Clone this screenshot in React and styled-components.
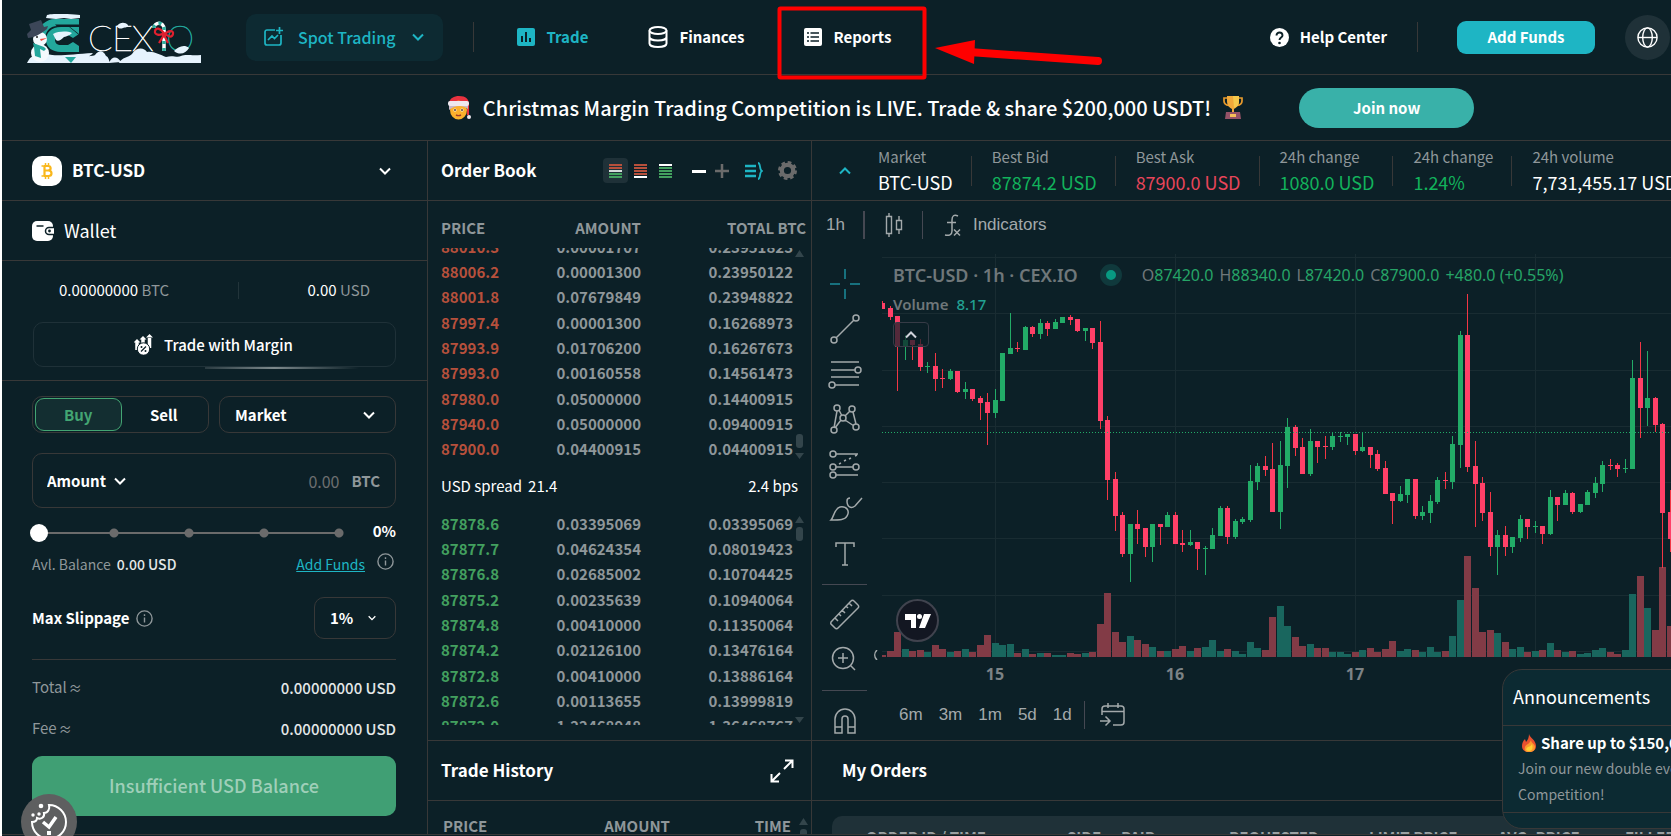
import React, { useState } from 'react';
import styled, { createGlobalStyle, css } from 'styled-components';

const GlobalStyle = createGlobalStyle`
  * { box-sizing: border-box; }
  body {
    margin: 0;
    overflow: hidden;
    background: #ffffff;
    color: #ffffff;
    font-family: 'Noto Sans CJK SC', 'Noto Sans', sans-serif;
    font-size: 16px;
    line-height: 24px;
  }
  button, input, select {
    margin: 0;
    padding: 0;
    border: 0;
    background: none;
    color: inherit;
    font: inherit;
  }
  button { cursor: pointer; }
  a { color: inherit; text-decoration: none; }
  svg { display: block; flex: none; }
`;

const line = '#383838';
const bg = '#0c2027';
const teal = '#1eb5c4';
const grey = '#8f979a';

/* ---------- layout ---------- */

const Page = styled.div`
  display: flex;
  flex-direction: column;
  height: 100vh;
  margin-left: 2px;
  padding-bottom: 1px;
  background: ${bg};
  overflow: hidden;
`;

const Header = styled.header`
  display: flex;
  align-items: center;
  flex: none;
  height: 75px;
  padding-left: 25px;
  border-bottom: 1px solid ${line};
  font-weight: 500;
`;

const LogoLink = styled.a`
  padding-top: 3px;
  margin-right: 45px;
`;

const SpotButton = styled.button`
  display: flex;
  align-items: center;
  gap: 15px;
  height: 47px;
  padding: 0 19px 0 18px;
  margin-right: 30px;
  border-radius: 10px;
  background: #0d2a32;
  color: ${teal};
  svg:last-child { margin-left: 2px; }
`;

const HeaderLine = styled.span`
  width: 1px;
  height: 30px;
  background: ${line};
`;

const Nav = styled.nav`
  display: flex;
  align-items: center;
  gap: 60px;
  padding-left: 43px;
`;

const NavLink = styled.a`
  display: flex;
  align-items: center;
  gap: 11px;
  color: ${(p) => (p.$active ? teal : '#ffffff')};
  font-size: 15px;
  font-weight: 700;
`;

const HeaderRight = styled.div`
  display: flex;
  align-items: center;
  gap: 30px;
  margin-left: auto;
`;

const AddFundsButton = styled.button`
  height: 33px;
  width: 138px;
  margin-left: 9px;
  border-radius: 9px;
  background: ${teal};
  font-size: 15px;
  font-weight: 700;
`;

const GlobeButton = styled.button`
  display: grid;
  place-items: center;
  width: 45px;
  height: 45px;
  margin-right: 1px;
  border-radius: 50%;
  background: #1f3138;
`;

const Banner = styled.div`
  display: flex;
  align-items: center;
  justify-content: center;
  gap: 56px;
  flex: none;
  height: 66px;
  padding-left: 249px;
  border-bottom: 1px solid ${line};
`;

const BannerText = styled.div`
  display: flex;
  align-items: center;
  gap: 12px;
  font-size: 20px;
  font-weight: 500;
  white-space: nowrap;
`;

const JoinButton = styled.button`
  width: 175px;
  height: 40px;
  border-radius: 20px;
  background: #39b1a9;
  font-size: 15px;
  font-weight: 700;
`;

const Main = styled.main`
  display: flex;
  flex: 1;
  min-height: 0;
  border-bottom: 1px solid ${line};
`;

const Column = styled.section`
  display: flex;
  flex-direction: column;
  flex: none;
  width: ${(p) => p.$width};
  min-width: 0;
  overflow: hidden;
  border-right: 1px solid ${line};
`;

const RightColumn = styled(Column)`
  flex: 1;
  border-right: 0;
`;

const PanelHead = styled.div`
  display: flex;
  align-items: center;
  flex: none;
  height: 60px;
  padding: 0 ${(p) => p.$right || '16px'} 0 ${(p) => p.$left || '13px'};
  border-bottom: 1px solid ${line};
`;

const Title = styled.h2`
  margin: 0;
  padding-bottom: 2px;
  font-size: 17px;
  font-weight: 700;
`;

const WalletTitle = styled(Title)`
  padding-left: 10px;
  font-size: 18px;
  font-weight: 400;
`;

/* ---------- trade form ---------- */

const PairButton = styled.button`
  display: flex;
  align-items: center;
  gap: 10px;
  width: 100%;
  font-size: 17px;
  font-weight: 700;
  svg:last-child { margin-left: auto; }
  span { padding-bottom: 2px; }
`;

const WalletBox = styled.div`
  flex: none;
  height: 120px;
  padding: 17px 31px 0 31px;
  border-bottom: 1px solid ${line};
`;

const Balances = styled.div`
  display: flex;
  align-items: center;
  justify-content: space-between;
  padding: 0 26px;
  font-size: 15px;
  span { color: ${grey}; }
  i {
    width: 1px;
    height: 17px;
    background: #22343a;
  }
`;

const MarginButton = styled.button`
  position: relative;
  display: flex;
  align-items: center;
  justify-content: center;
  gap: 11px;
  width: 100%;
  height: 45px;
  margin-top: 20px;
  padding-right: 2px;
  border: 1px solid #1f3138;
  border-radius: 10px;
  font-size: 15px;
  font-weight: 500;
  &::after {
    content: '';
    position: absolute;
    right: 36px;
    bottom: -3px;
    width: 154px;
    height: 2px;
    background: linear-gradient(90deg, #2a3b41, #7d898c 45%, transparent);
  }
`;

const Form = styled.form`
  padding: 15px 31px 0 30px;
  font-size: 15px;
`;

const FormRow = styled.div`
  display: flex;
  align-items: center;
  justify-content: space-between;
  gap: 10px;
`;

const TypeRow = styled.div`
  display: grid;
  grid-template-columns: 1fr 1fr;
  gap: 10px;
`;

const Outline = styled.div`
  display: flex;
  align-items: center;
  border: 1px solid ${line};
  border-radius: 10px;
`;

const SideSwitch = styled(Outline)`
  height: 37px;
  padding: 0 2px;
`;

const SideButton = styled.button`
  flex: 1;
  height: 33px;
  border-radius: 9px;
  font-weight: 700;
  ${(p) =>
    p.$active &&
    css`
      border: 1px solid #43a573;
      background: #132e31;
      color: #43a573;
    `}
`;

const SelectBox = styled.span`
  position: relative;
  display: flex;
  align-items: center;
  width: ${(p) => p.$width || 'auto'};
  height: ${(p) => p.$height};
  border: ${(p) => (p.$plain ? 0 : 1)}px solid ${line};
  border-radius: 10px;
  select {
    width: 100%;
    height: 100%;
    padding-left: ${(p) => (p.$plain ? 0 : 15)}px;
    appearance: none;
    outline: none;
    font-weight: 700;
  }
  svg {
    position: absolute;
    right: ${(p) => p.$icon}px;
    pointer-events: none;
  }
`;

const AmountBox = styled(Outline)`
  justify-content: space-between;
  height: 55px;
  margin-top: 20px;
  padding: 0 15px 0 14px;
  label {
    display: flex;
    align-items: center;
    gap: 12px;
    color: ${grey};
    font-weight: 700;
  }
  input {
    width: 90px;
    outline: none;
    font-size: 16px;
    font-weight: 400;
    text-align: right;
    &::placeholder { color: #6c6f70; opacity: 1; }
  }
`;

const SliderRow = styled(FormRow)`
  margin: 11px 0 0 -2px;
  font-weight: 700;
`;

const Slider = styled.input`
  appearance: none;
  width: 318px;
  height: 18px;
  margin-top: 3px;
  background:
    radial-gradient(circle at 9px 9px, #6b6b6b 4px, transparent 5px) 0 0 / 75px 18px repeat-x,
    linear-gradient(#6b6b6b, #6b6b6b) 9px 8px / 300px 2px no-repeat;
  &::-webkit-slider-thumb {
    appearance: none;
    width: 18px;
    height: 18px;
    border-radius: 50%;
    background: #ffffff;
  }
`;

const FundsLink = styled.a`
  margin-left: auto;
  color: ${teal};
  text-decoration: underline;
`;

const SmallRow = styled(FormRow)`
  margin-top: 9px;
  padding-right: 2px;
  gap: 6px;
  font-size: 14px;
  color: ${grey};
  b { color: #e4e8e9; font-weight: 500; }
  svg { margin: 0 0 6px 6px; }
`;

const SlippageRow = styled(FormRow)`
  margin-top: 21px;
  padding-bottom: 20px;
  border-bottom: 1px solid ${line};
  label {
    display: flex;
    align-items: center;
    gap: 6px;
    color: #ffffff;
    font-weight: 700;
  }
`;

const Totals = styled.div`
  padding: 7px 0;
`;

const TotalRow = styled(FormRow)`
  height: 41px;
  color: ${grey};
  b { color: #e4e8e9; font-weight: 500; }
  small { padding-left: 2px; font-size: 13px; }
`;

const SubmitButton = styled.button`
  width: 100%;
  height: 60px;
  padding-bottom: 2px;
  border-radius: 10px;
  background: #409f74;
  color: #9fcfb9;
  font-size: 18px;
  font-weight: 500;
`;

const CookieButton = styled.button`
  position: fixed;
  left: 21px;
  bottom: -14px;
  display: grid;
  place-items: center;
  width: 56px;
  height: 56px;
  border-radius: 50%;
  background: #5e5f60;
`;

/* ---------- order book ---------- */

const BookTools = styled.div`
  display: flex;
  align-items: center;
  margin-left: auto;
`;

const ToolButton = styled.button`
  display: grid;
  place-items: center;
  width: 25px;
  height: 25px;
  border-radius: 4px;
  background: ${(p) => (p.$active ? '#1f3138' : 'none')};
`;

const IconButton = styled.button`
  margin-left: ${(p) => (p.$end ? 'auto' : `${p.$gap || 0}px`)};
  color: ${teal};
`;

const BookTable = styled.table`
  display: block;
  flex: none;
  padding-left: 13px;
  color: ${grey};
  font-size: 15px;
  thead, tbody { display: block; }
  tr {
    display: grid;
    grid-template-columns: 76px 124px 152px;
    align-items: center;
    flex: none;
    height: 25px;
  }
  tbody tr:nth-child(3n) { height: 26px; }
  thead tr {
    grid-template-columns: 76px 124px 165px;
    height: 47px;
    padding-top: 7px;
  }
  th, td {
    padding: 0;
    font-weight: 700;
    text-align: right;
  }
  th:first-child, td:first-child { text-align: left; }
  td:first-child { color: ${(p) => (p.$side === 'ask' ? '#b6503c' : '#43a05f')}; }
`;

const BookBody = styled.tbody`
  && {
    display: flex;
    flex-direction: column;
    justify-content: ${(p) => (p.$side === 'ask' ? 'flex-end' : 'flex-start')};
    height: 214px;
    overflow: hidden;
  }
`;

const BookWrap = styled.div`
  position: relative;
`;

const ScrollMarks = styled.svg`
  position: absolute;
  right: ${(p) => p.$right || 7}px;
  top: ${(p) => p.$top}px;
`;

const Spread = styled.div`
  display: flex;
  align-items: center;
  gap: 6px;
  height: 49px;
  padding: 0 13px 1px;
  font-size: 15px;
  span:last-child { margin-left: auto; }
`;

const BookPanel = styled.div`
  flex: none;
  height: 540px;
  border-bottom: 1px solid ${line};
`;

const HistoryTable = styled.table`
  display: block;
  padding: 13px 20px 0 15px;
  color: ${grey};
  font-size: 15px;
  thead { display: block; }
  tr { display: grid; grid-template-columns: 100px 127px 1fr; }
  th { padding: 0; font-weight: 700; text-align: right; }
  th:first-child { text-align: left; }
`;

/* ---------- ticker and chart ---------- */

const Ticker = styled.dl`
  display: flex;
  align-items: center;
  margin: 0 0 0 27px;
  white-space: nowrap;
`;

const Stat = styled.div`
  display: flex;
  align-items: center;
  dt { color: ${grey}; font-size: 15px; }
  dd { margin: 1px 0 3px; color: ${(p) => p.$color || '#ffffff'}; font-size: 18px; }
  &:not(:last-child)::after {
    content: '';
    width: 1px;
    height: 30px;
    margin: 0 20px 0 18px;
    background: ${line};
  }
`;

const ChartToolbar = styled.div`
  display: flex;
  align-items: center;
  flex: none;
  height: 46px;
  padding: 2px 0 0 14px;
  color: #a3a9ab;
  font-family: 'Liberation Sans', sans-serif;
  font-size: 17px;
  button { display: flex; align-items: center; gap: 12px; }
`;

const ToolLine = styled.span`
  width: ${(p) => p.$w || 1}px;
  height: 28px;
  margin: ${(p) => p.$m};
  background: #454852;
`;

const ChartArea = styled.div`
  display: flex;
  flex: none;
  height: 494px;
  border-bottom: 1px solid ${line};
`;

const Tools = styled.div`
  display: flex;
  flex-direction: column;
  align-items: center;
  flex: none;
  width: 70px;
  padding: 14px 5px 0 0;
  color: #a3a9ab;
  overflow: hidden;
  button {
    display: grid;
    place-items: center;
    flex: none;
    height: 45px;
  }
  hr {
    width: 45px;
    flex: none;
    height: 1px;
    margin: 8px 0 6px;
    border: 0;
    background: #454852;
  }
  hr:last-of-type { margin: 9px 0 7px; }
`;

const Chart = styled.div`
  position: relative;
  flex: 1;
  min-width: 0;
  padding-top: 7px;
  overflow: hidden;
`;

const Legend = styled.div`
  position: absolute;
  top: 13px;
  left: 11px;
  color: #6f777a;
  font-family: 'Noto Sans', sans-serif;
  font-size: 16px;
  font-weight: 500;
  white-space: nowrap;
  strong {
    padding-right: 22px;
    font-size: 18px;
    font-weight: 600;
  }
`;

const LegendRow = styled.div`
  display: flex;
  align-items: center;
  height: 29px;
  font-size: ${(p) => (p.$small ? '15px' : 'inherit')};
  span {
    margin-right: 6px;
    font-weight: ${(p) => (p.$small ? 600 : 400)};
  }
  em { color: #26a567; font-style: normal; }
  em.volume { padding-left: 2px; color: #22a193; }
`;

const StatusDot = styled.i`
  width: 22px;
  height: 22px;
  margin-right: 20px;
  border: 6px solid #10393c;
  border-radius: 50%;
  background: #089981;
`;

const CollapseButton = styled.button`
  display: grid;
  place-items: center;
  width: 36px;
  height: 25px;
  margin-top: 4px;
  border: 1px solid #363b46;
  border-radius: 4px;
  background: rgba(12, 32, 39, 0.7);
  color: #d1d4dc;
`;

const TvBadge = styled.a`
  position: absolute;
  left: 14px;
  top: 352px;
`;

const ChartHandle = styled.svg`
  position: absolute;
  left: 62px;
  bottom: 80px;
`;

const ChartBody = styled.div`
  position: relative;
  display: flex;
  flex: 1;
  min-width: 0;
`;

const Dates = styled.div`
  display: flex;
  height: 36px;
  color: #7c8386;
  font-family: 'Noto Sans', sans-serif;
  font-weight: 700;
  line-height: 35px;
  span { width: 180px; text-align: center; }
  span:first-child { margin-left: 23px; }
`;

const Ranges = styled.div`
  display: flex;
  align-items: center;
  gap: 16px;
  height: 44px;
  padding-left: 17px;
  color: #a3a9ab;
  font-family: 'Liberation Sans', sans-serif;
  font-size: 17px;
`;

const Orders = styled.table`
  display: block;
  width: 1000px;
  margin: 15px 0 0 20px;
  padding-left: 34px;
  border-radius: 10px 10px 0 0;
  background: #1f3138;
  color: #9aa1a3;
  font-size: 15px;
  thead { display: block; }
  tr {
    display: grid;
    grid-template-columns: 201px 54px 108px 140px 129px 127px 120px;
    align-items: center;
    height: 41px;
  }
  th { padding: 0; font-weight: 700; text-align: left; white-space: nowrap; }
`;

const Announcements = styled.aside`
  position: fixed;
  right: -170px;
  bottom: 7px;
  width: 339px;
  height: 160px;
  border: 1px solid ${line};
  border-radius: 20px;
  background: #0c2a32;
  h3 {
    height: 56px;
    margin: 0;
    padding: 0 10px;
    border-bottom: 1px solid ${line};
    font-size: 18px;
    font-weight: 400;
    line-height: 53px;
  }
`;

const News = styled.div`
  height: 87px;
  padding: 5px 15px;
  border-bottom: 1px solid ${line};
  h4 {
    display: flex;
    align-items: center;
    gap: 5px;
    margin: 0 0 0 4px;
    font-size: 15px;
    font-weight: 700;
    white-space: nowrap;
  }
  p {
    margin: 0;
    color: ${grey};
    font-size: 14px;
    line-height: 26px;
  }
`;

/* marker drawn over the header */
const Marker = styled.svg`
  position: absolute;
  top: 6px;
  left: 777px;
`;

/* ---------- data ---------- */

const asks = [
  ['88010.3', '0.00001707', '0.23951823'],
  ['88006.2', '0.00001300', '0.23950122'],
  ['88001.8', '0.07679849', '0.23948822'],
  ['87997.4', '0.00001300', '0.16268973'],
  ['87993.9', '0.01706200', '0.16267673'],
  ['87993.0', '0.00160558', '0.14561473'],
  ['87980.0', '0.05000000', '0.14400915'],
  ['87940.0', '0.05000000', '0.09400915'],
  ['87900.0', '0.04400915', '0.04400915'],
];

const bids = [
  ['87878.6', '0.03395069', '0.03395069'],
  ['87877.7', '0.04624354', '0.08019423'],
  ['87876.8', '0.02685002', '0.10704425'],
  ['87875.2', '0.00235639', '0.10940064'],
  ['87874.8', '0.00410000', '0.11350064'],
  ['87874.2', '0.02126100', '0.13476164'],
  ['87872.8', '0.00410000', '0.13886164'],
  ['87872.6', '0.00113655', '0.13999819'],
  ['87872.0', '1.22468948', '1.36468767'],
];

const stats = [
  { label: 'Market', value: 'BTC-USD' },
  { label: 'Best Bid', value: '87874.2 USD', color: '#12b35c' },
  { label: 'Best Ask', value: '87900.0 USD', color: '#e8455a' },
  { label: '24h change', value: '1080.0 USD', color: '#12b35c' },
  { label: '24h change', value: '1.24%', color: '#12b35c' },
  { label: '24h volume', value: '7,731,455.17 USD' },
];

// direction, high, body top, body bottom, low, volume
const candles = `r,47,49,55,55,2 r,52,54,63,66,6 r,62,62,93,137,25 g,81,86,92,106,8 r,86,86,91,106,6
r,85,90,113,117,7 g,108,112,113,119,5 r,99,112,125,137,12 r,115,124,125,134,8 g,115,117,125,126,5
r,117,117,138,139,6 g,128,135,138,145,8 r,135,135,145,147,5 r,142,144,149,166,12 r,139,148,159,191,22
g,135,146,159,164,14 g,99,99,147,147,12 g,59,94,100,100,13 r,88,94,95,98,4 g,72,73,96,96,8
r,72,73,80,83,3 g,65,69,80,85,4 r,67,69,75,82,4 g,65,68,75,75,2 g,63,63,69,69,2
r,61,63,66,71,4 r,65,65,77,78,3 g,74,74,77,87,4 r,74,74,89,95,5 r,67,88,167,175,33
r,162,166,226,246,64 r,218,225,262,277,25 r,258,261,300,303,15 g,270,270,300,328,21 r,256,270,275,290,17
r,274,274,293,303,13 g,270,270,293,308,10 r,270,270,273,291,6 g,258,261,273,273,6 r,258,261,290,290,8
r,276,289,291,298,11 g,276,288,291,292,6 r,288,288,295,316,9 g,292,294,295,321,10 g,274,281,295,295,17
g,252,254,282,282,6 r,252,254,283,290,8 g,265,267,283,285,6 g,263,265,268,270,3 g,211,227,266,268,15
g,209,212,228,236,9 r,202,212,216,222,7 r,189,215,258,258,40 g,187,211,258,275,51 g,164,173,212,234,31
r,171,173,194,202,20 r,184,193,220,220,11 g,175,187,220,222,13 r,187,187,193,209,9 r,182,192,193,205,9
g,179,182,193,196,5 g,178,182,183,188,5 g,180,180,183,191,3 r,180,180,197,201,5 g,178,193,197,198,7
r,193,193,201,214,9 r,196,200,215,217,5 r,207,214,240,240,8 r,239,239,247,270,16 g,232,240,247,248,6
g,225,225,241,249,8 r,225,225,262,265,7 g,252,258,262,266,5 g,241,247,259,269,10 g,223,226,248,250,5
r,218,226,227,235,6 g,182,190,228,235,21 g,77,81,191,214,57 r,40,81,213,218,101 r,187,212,230,273,69
r,223,229,259,267,25 r,238,258,293,302,27 g,276,281,293,321,24 r,272,281,293,302,15 g,283,283,293,299,8
g,261,265,284,288,10 r,265,265,273,285,5 g,267,272,273,279,6 r,272,272,280,290,7 g,236,243,280,281,14
r,243,243,251,267,7 g,236,239,251,251,5 r,238,239,258,260,6 g,250,250,258,259,3 g,236,238,251,251,4
g,223,229,239,244,7 g,207,211,230,238,9 r,205,211,212,216,5 r,209,211,215,223,3 g,205,214,215,219,7
g,106,124,215,215,63 r,88,124,154,184,81 g,97,144,154,172,49 r,143,144,171,178,27 r,169,170,259,314,90
r,236,258,285,298,31`
  .split(/\s+/)
  .map((row) => {
    const [dir, ...values] = row.split(',');
    return { up: dir === 'g', values: values.map(Number) };
  });

/* ---------- icons ---------- */

const Chevron = ({ size = 12, up, width = 2, color = 'currentColor' }) => (
  <svg width={size} height={size} viewBox="0 0 12 12" fill="none" stroke={color} strokeWidth={width}>
    <path d={up ? 'M1 8.5l5-5 5 5' : 'M1 3.5l5 5 5-5'} />
  </svg>
);

const Info = () => (
  <svg width="17" height="17" viewBox="0 0 17 17" fill="none" stroke="#8f979a" strokeWidth="1.4">
    <circle cx="8.5" cy="8.5" r="7.6" />
    <path d="M8.5 7.500v5M8.5 4.300v1.600" />
  </svg>
);

const Logo = () => (
  <svg width="174" height="50" viewBox="0 0 174 50">
    <g fill="#23a79c">
      <path d="M52 5H28C19 5 12 12 10 20l8 4c1-8 6-12 12-12h22z" />
      <path d="M52 13H34c-10 0-15 6-15 13s6 12 15 12h18v-6l-6-4-5 3h-7c-4 0-6-2-6-5s2-5 6-5h7l5 3 6-4z" />
      <path d="M14 42h34l-8 7h-22z" />
    </g>
    <path d="M28 10.500h24v2H30zM41 12l11 9v-9z" fill="#0c2027" />
    <path d="M43 13h9v7z" fill="#23a79c" />
    <path d="M20 1c6-2 26-1 33 0v3l-9 1-7-1-8 1-10-1z" fill="#e6f3fd" />
    <path d="M26 20c6-3 14-3 19-1-3 3-5 3-8 4-3 3-6 5-8 3z" fill="#e6f3fd" />
    <g fontFamily="Lato, 'Liberation Sans', sans-serif" fontSize="36" fontWeight="100" strokeWidth="0.6">
      <text x="61" y="37" fill="#fff" stroke="#fff">C</text>
      <text x="85" y="37" fill="#fff" stroke="#fff">E</text>
      <text x="105" y="37" fill="#fff" stroke="#fff">X</text>
      <text x="139" y="37" fill="#23a79c" stroke="#23a79c">O</text>
    </g>
    <path d="M137 37V15c0-8-10-7-10-1" fill="none" stroke="#fff" strokeWidth="3.5" />
    <path d="M137 37V15c0-8-10-7-10-1" fill="none" stroke="#2fae9e" strokeWidth="3.5" strokeDasharray="3 4" />
    <path d="M137 19c-4-5-8-6-9-2s5 5 9 2c4 4 8 5 9 1s-5-4-9 1l-5 8m5-8l4 8" fill="none" stroke="#e0202f" strokeWidth="2.2" />
    <path d="M90 12c3-4 8-4 11-1 0 3-3 2-5 3s-5 1-6-2zM147 37c4-4 10-7 15-3-3 5-9 8-15 3z" fill="#e6f3fd" />
    <path d="M20 40c10 3 25 0 46-1-4 5-12 6-18 8H20zM0 49c3-7 8-9 13-6 8-2 50 1 55-2 4-5 8-5 11 1 3 1 3 5 4 7zM82 49c3-7 8-7 12-1zM92 49c3-6 9-5 13-9 4-7 12-7 15-2 7-1 13 3 19 5 7-2 11 1 15-1 5-2 10 0 20-1v8z" fill="#e6f3fd" />
    <path d="M38 43h11l-5 6z" fill="#23a79c" />
    <circle cx="13" cy="39" r="9" fill="#f4f9fd" />
    <circle cx="13" cy="25" r="7" fill="#f4f9fd" />
    <path d="M6 29l11 4 2 2-2 2-4-2 1 9-6-2-1-9z" fill="#23a79c" />
    <path d="M0 20l4-4-2-6 12-4 3 7 4-1-1 3C14 20 6 24 1 24z" fill="#3c4658" />
    <path d="M13 25l7-1-6 3z" fill="#f0483c" />
    <circle cx="10" cy="23" r="1" fill="#222" />
  </svg>
);

const SpotIcon = () => (
  <svg width="19" height="20" viewBox="0 0 19 20" fill="none" stroke="currentColor" strokeWidth="1.7">
    <path d="M11 3H3a2 2 0 0 0-2 2v11a2 2 0 0 0 2 2h12a2 2 0 0 0 2-2V8M15.500 0v7M12 3.500h7M4 13l4-4 2.500 2.500L14 8" />
  </svg>
);

const TradeIcon = () => (
  <svg width="18" height="18" viewBox="0 0 18 18">
    <rect width="18" height="18" rx="2" fill="currentColor" />
    <path d="M5 8v6M9 4v10M13 10v4" stroke="#0c2027" strokeWidth="2" />
  </svg>
);

const FinanceIcon = () => (
  <svg width="20" height="22" viewBox="0 0 20 22" fill="none" stroke="currentColor" strokeWidth="2">
    <ellipse cx="10" cy="4.5" rx="8.5" ry="3.5" />
    <path d="M1.500 4.500v13c0 2 3.500 3.500 8.500 3.500s8.500-1.500 8.500-3.500v-13M1.500 11c0 2 3.500 3.500 8.500 3.500s8.500-1.500 8.500-3.500" />
  </svg>
);

const ReportIcon = () => (
  <svg width="18" height="18" viewBox="0 0 18 18">
    <rect width="18" height="18" rx="2" fill="currentColor" />
    <path d="M3 5h2M6.500 5h8.500M3 9h2M6.500 9h8.500M3 13h2M6.500 13h8.500" stroke="#0c2027" strokeWidth="1.6" />
  </svg>
);

const HelpIcon = () => (
  <svg width="19" height="19" viewBox="0 0 19 19">
    <circle cx="9.5" cy="9.5" r="9.5" fill="#fff" />
    <path d="M6.500 7.500c0-4 6-4 6 0 0 2-3 2.200-3 4.500" fill="none" stroke="#0c2027" strokeWidth="1.9" />
    <circle cx="9.5" cy="15" r="1.3" fill="#0c2027" />
  </svg>
);

const GlobeIcon = () => (
  <svg width="21" height="21" viewBox="0 0 21 21" fill="none" stroke="#fff" strokeWidth="1.4">
    <circle cx="10.5" cy="10.5" r="9.6" />
    <ellipse cx="10.5" cy="10.5" rx="4.8" ry="9.6" />
    <path d="M1 10.500h19" />
  </svg>
);

const SantaIcon = () => (
  <svg width="23" height="24" viewBox="0 0 23 24">
    <path d="M1 7C2 2 6 0 11 0c7 0 10 3 10 9v10h-2V9z" fill="#e8323f" />
    <ellipse cx="10.5" cy="14" rx="8.5" ry="9.5" fill="#fbb02c" />
    <path d="M1 9c4-2 15-2 19 0v4c-5-4-13-4-19 1z" fill="#c9b9c8" />
    <rect x="0" y="5" width="21" height="5" rx="2" fill="#efe8ee" />
    <circle cx="21" cy="21" r="2" fill="#efe8f0" />
    <circle cx="7" cy="14" r="1.5" fill="#fff" />
    <circle cx="14" cy="14" r="1.5" fill="#fff" />
    <circle cx="7" cy="14" r="1" fill="#5b3c2c" />
    <circle cx="14" cy="14" r="1" fill="#5b3c2c" />
    <path d="M8 19c2 1 3 1 5 0" stroke="#a23a28" strokeWidth="1.4" fill="none" />
  </svg>
);

const TrophyIcon = () => (
  <svg width="20" height="23" viewBox="0 0 20 23">
    <path d="M4 2H1v3c0 3 2 4 5 4.500M16 2h3v3c0 3-2 4-5 4.500" fill="none" stroke="#e89a2c" strokeWidth="1.7" />
    <path d="M4 0h12v5c0 5-3 7-5 8v3H9v-3C7 12 4 10 4 5z" fill="#f2a93a" />
    <path d="M10 0h6v5c0 4-2 6-5 7z" fill="#f7c94c" />
    <path d="M3 16h14l1 7H2z" fill="#955267" />
    <rect x="7" y="18" width="6" height="3" fill="#f7c05a" />
  </svg>
);

const BtcIcon = () => (
  <svg width="30" height="30" viewBox="0 0 30 30">
    <rect width="30" height="30" rx="10" fill="#fff" />
    <g fill="none" stroke="#f9b71c">
      <path d="M12.500 10v10M12 10h4c3.500 0 3.500 4.500 0 4.500h-3h3.500c4 0 4 5.500 0 5.500H12" strokeWidth="2.2" />
      <path d="M9.500 10H13M9.500 20H13M13.500 7V9.500M16.500 7V9.500M13.500 20.500V23M16.500 20.500V23" strokeWidth="1.5" />
    </g>
  </svg>
);

const WalletIcon = () => (
  <svg width="22" height="20" viewBox="0 0 22 20">
    <rect width="21" height="20" rx="5" fill="#fff" />
    <path d="M4.500 5h7" stroke="#0c2027" strokeWidth="1.5" />
    <path d="M22 6.500h-5a3.500 3.500 0 0 0 0 7h5" fill="#fff" stroke="#0c2027" strokeWidth="1.5" />
    <circle cx="17.5" cy="10" r="1.4" fill="#0c2027" />
  </svg>
);

const MarginIcon = () => (
  <svg width="19" height="21" viewBox="0 0 19 21">
    <path d="M3 16V8M9 10V5M15.500 14V4" stroke="#fff" strokeWidth="3.5" />
    <path d="M-.5 8.500L3 5l3.500 3.500zM5.500 5.500L9 2l3.500 3.500zM12 3.500L15.500 0 19 3.500z" fill="#fff" />
    <circle cx="9.5" cy="15" r="6.2" fill="#fff" stroke="#0c2027" />
    <path d="M7 17.500l5-5" stroke="#0c2027" strokeWidth="1.3" />
    <circle cx="7.5" cy="13" r="1" fill="#0c2027" />
    <circle cx="11.5" cy="17" r="1" fill="#0c2027" />
  </svg>
);

const CookieIcon = () => (
  <svg width="40" height="40" viewBox="0 0 40 40" fill="none" stroke="#fff" strokeWidth="2">
    <path d="M20 3a17 17 0 1 1-17 17c4 0 5-2 5-4 4 2 8-1 7-5 4 0 6-4 5-8z" />
    <path d="M14 20l6 5 7-10" strokeWidth="3.5" />
    <g fill="#fff" stroke="none">
      <circle cx="12" cy="4" r="2.3" />
      <circle cx="4" cy="13" r="1.7" />
      <circle cx="10" cy="12" r="1.7" />
      <rect x="18" y="29" width="4" height="4" />
    </g>
  </svg>
);

const BookIcon = ({ colors }) => (
  <svg width="13" height="14" viewBox="0 0 13 14">
    {colors.map((c, i) => (
      <rect key={i} y={i * 3} width="13" height="2" fill={c} />
    ))}
  </svg>
);

const GearIcon = () => (
  <svg width="19" height="19" viewBox="0 0 19 19" fill="none" stroke="#6b6b6b">
    <circle cx="9.5" cy="9.5" r="5.7" strokeWidth="4.2" />
    <circle cx="9.5" cy="9.5" r="8.3" strokeWidth="2.4" strokeDasharray="3.7 2.81" />
  </svg>
);

const FireIcon = () => (
  <svg width="14" height="18" viewBox="0 0 14 18">
    <path d="M7 0c1 4 7 6 7 12 0 4-3 6-7 6s-7-2-7-6c0-3 1-5 3-7l1 3c2-2 3-5 3-8z" fill="#e9512f" />
    <path d="M9 6c0 3 4 4 4 7s-2 5-6 5-5-2-4-5 5-3 6-7z" fill="#fb9a2d" />
    <path d="M10 10c1 3 1 7-3 7s-3-3-1-4 3-1 4-3z" fill="#fdd032" />
  </svg>
);

const ExpandIcon = () => (
  <svg width="24" height="24" viewBox="0 0 24 24" fill="none" stroke="#fff" strokeWidth="2">
    <path d="M14 10l8.500-8.500M15 1.500h7.500V9M10 14l-8.500 8.500M9 22.500H1.500V15" />
  </svg>
);

const toolPaths = [
  'M16 1v10M16 21v10M1 16h10M21 16h10',
  'M7 25L25 7M5 27m-3 0a3 3 0 1 0 6 0a3 3 0 1 0-6 0M27 5m-3 0a3 3 0 1 0 6 0a3 3 0 1 0-6 0',
  'M2 4h28M2 12h24M2 19h28M6 27h24M29 12m-3 0a3 3 0 1 0 6 0a3 3 0 1 0-6 0M3 27m-3 0a3 3 0 1 0 6 0a3 3 0 1 0-6 0',
  'M5 25L8 8M10 7l3 6M16 13l5-5M24 9l3 12M16 17l9 6M12 17l-6 8M5 27m-3 0a3 3 0 1 0 6 0a3 3 0 1 0-6 0M8 5m-3 0a3 3 0 1 0 6 0a3 3 0 1 0-6 0M23 6m-3 0a3 3 0 1 0 6 0a3 3 0 1 0-6 0M27 24m-3 0a3 3 0 1 0 6 0a3 3 0 1 0-6 0M14 15m-3 0a3 3 0 1 0 6 0a3 3 0 1 0-6 0',
  'M7 6h22M7 19h17M7 27h22M10 16l2-1M15 13l2-1M20 11l2-1M26 8l2-1M4 6m-3 0a3 3 0 1 0 6 0a3 3 0 1 0-6 0M4 19m-3 0a3 3 0 1 0 6 0a3 3 0 1 0-6 0M27 19m-3 0a3 3 0 1 0 6 0a3 3 0 1 0-6 0M4 27m-3 0a3 3 0 1 0 6 0a3 3 0 1 0-6 0',
  'M2 27c3-3 3-11 9-13 7-1 10 4 7 9-2 4-7 4-16 4zM18 8c0 6 4 8 8 5l7-8M18 8c0-2 1-3 3-3',
  'M7 9V5h18v4M16 5v22M13 27h6',
];

const ToolIcon = ({ d, color }) => (
  <svg width="32" height="32" viewBox="0 0 32 32" fill="none" stroke={color || 'currentColor'} strokeWidth="1.5" overflow="visible">
    <path d={d} />
  </svg>
);

const CandleIcon = () => (
  <svg width="18" height="26" viewBox="0 0 18 26" fill="none" stroke="currentColor" strokeWidth="1.4">
    <path d="M1.500 4.500h5v17h-5zM4 1v3.500M4 21.500V25M11.500 8.500h5v9h-5zM14 4v4.500M14 17.500V22" />
  </svg>
);

const FxIcon = () => (
  <svg width="17" height="23" viewBox="0 0 17 23" fill="none" stroke="currentColor" strokeWidth="1.5">
    <path d="M14 2c-4-2-6 0-6 4v11c0 4-3 5-7 4M3 8.500h9M10 15.500l6 6M16 15.500l-6 6" />
  </svg>
);

const CalendarIcon = () => (
  <svg width="25" height="24" viewBox="0 0 25 24" fill="none" stroke="currentColor" strokeWidth="1.5">
    <path d="M2 12V6a3 3 0 0 1 3-3h16a3 3 0 0 1 3 3v13a3 3 0 0 1-3 3h-8M2 8.500h22M8 0v5M18 0v5M0 18h9M5.500 13.500L10 18l-4.500 4.500" />
  </svg>
);

const PriceChart = () => (
  <svg width="100%" height="403">
    {[3, 59, 116, 172, 228, 284, 341, 397].map((y) => (
      <rect key={y} y={y} width="100%" height="1" fill="#192c32" />
    ))}
    {[113, 293, 473, 653].map((x) => (
      <rect key={x} x={x} width="1" height="403" fill="#192c32" />
    ))}
    {candles.map(({ up, values: [high, top, bottom, low, volume] }, i) => {
      const x = Math.round(i * 7.5);
      return (
        <g key={i}>
          <rect x={x - 3} y={403 - volume} width="7" height={volume} fill={up ? '#19665e' : '#823b46'} />
          <rect x={x} y={high} width="1" height={low - high} fill={up ? '#22ab67' : '#f23645'} />
          <rect x={x - 2} y={top} width="5" height={bottom - top} fill={up ? '#22ab67' : '#ff4068'} />
        </g>
      );
    })}
    <line x1="0" x2="100%" y1="178.5" y2="178.5" stroke="#22ab67" strokeDasharray="1 2" />
  </svg>
);

/* ---------- sections ---------- */

const TopBar = () => (
  <Header>
    <LogoLink href="#" aria-label="CEX.IO"><Logo /></LogoLink>
    <SpotButton><SpotIcon />Spot Trading<Chevron /></SpotButton>
    <HeaderLine />
    <Nav>
      <NavLink href="#" $active><TradeIcon />Trade</NavLink>
      <NavLink href="#"><FinanceIcon />Finances</NavLink>
      <NavLink href="#"><ReportIcon />Reports</NavLink>
    </Nav>
    <HeaderRight>
      <NavLink href="#"><HelpIcon />Help Center</NavLink>
      <HeaderLine />
      <AddFundsButton>Add Funds</AddFundsButton>
      <GlobeButton aria-label="Language"><GlobeIcon /></GlobeButton>
    </HeaderRight>
  </Header>
);

const TradeForm = () => {
  const [side, setSide] = useState('Buy');
  const [percent, setPercent] = useState(0);

  return (
    <Column $width="426px">
      <PanelHead $left="30px" $right="36px">
        <PairButton><BtcIcon /><span>BTC-USD</span><Chevron /></PairButton>
      </PanelHead>
      <PanelHead $left="30px">
        <WalletIcon />
        <WalletTitle>Wallet</WalletTitle>
      </PanelHead>
      <WalletBox>
        <Balances>
          <div>0.00000000 <span>BTC</span></div>
          <i />
          <div>0.00 <span>USD</span></div>
        </Balances>
        <MarginButton><MarginIcon />Trade with Margin</MarginButton>
      </WalletBox>
      <Form onSubmit={(e) => e.preventDefault()}>
        <TypeRow>
          <SideSwitch>
            {['Buy', 'Sell'].map((name) => (
              <SideButton key={name} type="button" $active={side === name} onClick={() => setSide(name)}>
                {name}
              </SideButton>
            ))}
          </SideSwitch>
          <SelectBox $height="37px" $icon={20}>
            <select aria-label="Order type"><option>Market</option><option>Limit</option></select>
            <Chevron />
          </SelectBox>
        </TypeRow>
        <AmountBox>
          <SelectBox $plain $width="79px" $height="30px" $icon={0}>
            <select aria-label="Amount type"><option>Amount</option></select>
            <Chevron />
          </SelectBox>
          <label><input placeholder="0.00" aria-label="Amount" />BTC</label>
        </AmountBox>
        <SliderRow>
          <Slider type="range" aria-label="Percent of balance" value={percent} onChange={(e) => setPercent(e.target.value)} />
          {percent}%
        </SliderRow>
        <SmallRow>
          Avl. Balance <b>0.00 USD</b>
          <FundsLink href="#">Add Funds</FundsLink>
          <Info />
        </SmallRow>
        <SlippageRow>
          <label htmlFor="slippage">Max Slippage <Info /></label>
          <SelectBox $width="82px" $height="42px" $icon={19}>
            <select id="slippage"><option>1%</option><option>2%</option></select>
            <Chevron size={8} />
          </SelectBox>
        </SlippageRow>
        <Totals>
          <TotalRow><span>Total<small>≈</small></span><b>0.00000000 USD</b></TotalRow>
          <TotalRow><span>Fee<small>≈</small></span><b>0.00000000 USD</b></TotalRow>
        </Totals>
        <SubmitButton>Insufficient USD Balance</SubmitButton>
      </Form>
    </Column>
  );
};

const BookRows = ({ rows, side }) => (
  <BookBody $side={side}>
    {rows.map((row) => (
      <tr key={row[0]}>{row.map((cell, i) => <td key={i}>{cell}</td>)}</tr>
    ))}
  </BookBody>
);

const red = '#b6503c';
const green = '#43a05f';

const OrderBook = () => (
  <Column $width="384px">
    <PanelHead $right="14px">
      <Title>Order Book</Title>
      <BookTools>
        <ToolButton $active aria-label="All orders"><BookIcon colors={[red, red, '#d5dadb', green, green]} /></ToolButton>
        <ToolButton aria-label="Asks only"><BookIcon colors={[red, red, red, red, '#fff']} /></ToolButton>
        <ToolButton aria-label="Bids only"><BookIcon colors={['#fff', green, green, green, green]} /></ToolButton>
        <IconButton $gap={14} aria-label="Less precision">
          <svg width="14" height="14"><rect y="6" width="14" height="3" fill="#fff" /></svg>
        </IconButton>
        <IconButton $gap={9} aria-label="More precision">
          <svg width="14" height="14"><path d="M7 0v14M0 7h14" stroke="#6b6b6b" strokeWidth="2.5" /></svg>
        </IconButton>
        <IconButton $gap={16} aria-label="Grouping">
          <svg width="18" height="18" viewBox="0 0 18 18" fill="none" stroke="currentColor" strokeWidth="2.4">
            <path d="M0 4h11M0 9h11M0 14h11" />
            <path d="M13 1c3 0 1 7 4 8-3 1-1 8-4 8" strokeWidth="1.8" />
          </svg>
        </IconButton>
        <IconButton $gap={15} aria-label="Settings"><GearIcon /></IconButton>
      </BookTools>
    </PanelHead>
    <BookPanel>
      <BookWrap>
        <BookTable $side="ask">
          <thead><tr><th>PRICE</th><th>AMOUNT</th><th>TOTAL BTC</th></tr></thead>
          <BookRows rows={asks} side="ask" />
        </BookTable>
        <ScrollMarks $top={49} width="9" height="210" fill="#33454b">
          <path d="M0 7l4.500-7L9 7zM0 203h9l-4.500 6z" />
          <rect x="1" y="184" width="7" height="14" rx="3" />
        </ScrollMarks>
      </BookWrap>
      <Spread><span>USD spread</span><span>21.4</span><span>2.4 bps</span></Spread>
      <BookWrap>
        <BookTable $side="bid"><BookRows rows={bids} side="bid" /></BookTable>
        <ScrollMarks $top={5} width="9" height="210" fill="#33454b">
          <path d="M0 7l4.500-7L9 7zM0 201h9l-4.500 6z" />
          <rect x="1" y="11" width="7" height="14" rx="3" />
        </ScrollMarks>
      </BookWrap>
    </BookPanel>
    <PanelHead $right="17px">
      <Title>Trade History</Title>
      <IconButton $end aria-label="Expand"><ExpandIcon /></IconButton>
    </PanelHead>
    <BookWrap>
      <HistoryTable><thead><tr><th>PRICE</th><th>AMOUNT</th><th>TIME</th></tr></thead></HistoryTable>
      <ScrollMarks $top={17} $right={3} width="9" height="26" fill="#33454b">
        <path d="M0 7l4.500-7L9 7z" />
        <rect x="1" y="11" width="7" height="14" rx="3" />
      </ScrollMarks>
    </BookWrap>
  </Column>
);

const MarketPanel = () => (
  <RightColumn>
    <PanelHead $left="27px" $right="0px">
      <IconButton aria-label="Collapse"><Chevron up /></IconButton>
      <Ticker>
        {stats.map((s, i) => (
          <Stat key={i} $color={s.color}>
            <div><dt>{s.label}</dt><dd>{s.value}</dd></div>
          </Stat>
        ))}
      </Ticker>
    </PanelHead>
    <ChartToolbar>
      <button>1h</button>
      <ToolLine $w={2} $m="0 20px 0 18px" />
      <button aria-label="Chart style"><CandleIcon /></button>
      <ToolLine $m="0 21px 0 19px" />
      <button><FxIcon />Indicators</button>
    </ChartToolbar>
    <ChartArea>
      <ChartBody>
        <Tools>
          {toolPaths.map((d, i) => (
            <button key={i} aria-label={`Tool ${i + 1}`}><ToolIcon d={d} color={i === 0 ? '#1b8c9c' : undefined} /></button>
          ))}
          <hr />
          <button aria-label="Measure">
            <ToolIcon d="M2 24L22 3a2 2 0 0 1 3 0l4 4a2 2 0 0 1 0 3L9 30a2 2 0 0 1-3 0l-4-4a2 2 0 0 1 0-2zM6 20l3 3M10 16l2 2M13 12l3 3M17 8l2 2M20 5l3 3" />
          </button>
          <button aria-label="Zoom in">
            <ToolIcon d="M14 15m-10.500 0a10.500 10.500 0 1 0 21 0a10.500 10.500 0 1 0-21 0M14 10v10M9 15h10M21 22l5 5" />
          </button>
          <hr />
          <button aria-label="Magnet">
            <ToolIcon d="M6 28V14a10 10 0 0 1 20 0v14h-7V14a3 3 0 0 0-6 0v14zM6 22h7M19 22h7" />
          </button>
        </Tools>
        <Chart>
          <PriceChart />
          <Legend>
            <LegendRow>
              <strong>BTC-USD · 1h · CEX.IO</strong>
              <StatusDot />
              <span>O<em>87420.0</em></span>
              <span>H<em>88340.0</em></span>
              <span>L<em>87420.0</em></span>
              <span>C<em>87900.0</em></span>
              <span><em>+480.0 (+0.55%)</em></span>
            </LegendRow>
            <LegendRow $small><span>Volume</span><em className="volume">8.17</em></LegendRow>
            <CollapseButton aria-label="Hide legend"><Chevron up /></CollapseButton>
          </Legend>
          <TvBadge href="#" aria-label="TradingView">
            <svg width="43" height="43" viewBox="0 0 43 43">
              <circle cx="21.5" cy="21.5" r="20.5" fill="#131722" stroke="#40434e" strokeWidth="2" />
              <path d="M9 15h11v14h-5v-8H9zM28 15h7l-6 14h-6z" fill="#fff" />
              <circle cx="23.5" cy="17.5" r="2.5" fill="#fff" />
            </svg>
          </TvBadge>
          <Dates><span>15</span><span>16</span><span>17</span></Dates>
          <Ranges>
            <button>6m</button>
            <button>3m</button>
            <button>1m</button>
            <button>5d</button>
            <button>1d</button>
            <ToolLine $m="0 -1px 0 -4px" />
            <button aria-label="Go to date"><CalendarIcon /></button>
          </Ranges>
        </Chart>
        <ChartHandle width="4" height="10" viewBox="0 0 4 10" fill="none" stroke="#a3a9ab" strokeWidth="1.5">
          <path d="M3 0C0 3 0 7 3 10" />
        </ChartHandle>
      </ChartBody>
    </ChartArea>
    <PanelHead $left="30px"><Title>My Orders</Title></PanelHead>
    <Orders>
      <thead>
        <tr>
          {['ORDER ID / TIME', 'SIDE', 'PAIR', 'REQUESTED', 'LIMIT PRICE', 'AVG. PRICE', 'FILLED'].map((h) => <th key={h}>{h}</th>)}
        </tr>
      </thead>
    </Orders>
  </RightColumn>
);

const App = () => (
  <>
    <GlobalStyle />
    <Page>
      <TopBar />
      <Banner>
        <BannerText>
          <SantaIcon />
          Christmas Margin Trading Competition is LIVE. Trade &amp; share $200,000 USDT!
          <TrophyIcon />
        </BannerText>
        <JoinButton>Join now</JoinButton>
      </Banner>
      <Main>
        <TradeForm />
        <OrderBook />
        <MarketPanel />
      </Main>
    </Page>
    <Marker width="330" height="76" viewBox="0 0 330 76" aria-hidden="true">
      <rect x="2.5" y="2.5" width="145" height="69" rx="1" fill="none" stroke="#fe0000" strokeWidth="4" />
      <path d="M192 46L321 55" stroke="#fe0000" strokeWidth="8" strokeLinecap="round" />
      <path d="M158 42l40-8-1 24z" fill="#fe0000" />
    </Marker>
    <Announcements>
      <h3>Announcements</h3>
      <News>
        <h4><FireIcon />Share up to $150,000 in rewards</h4>
        <p>Join our new double event: Trading Competition!</p>
      </News>
    </Announcements>
    <CookieButton aria-label="Cookie settings"><CookieIcon /></CookieButton>
  </>
);

export default App;
